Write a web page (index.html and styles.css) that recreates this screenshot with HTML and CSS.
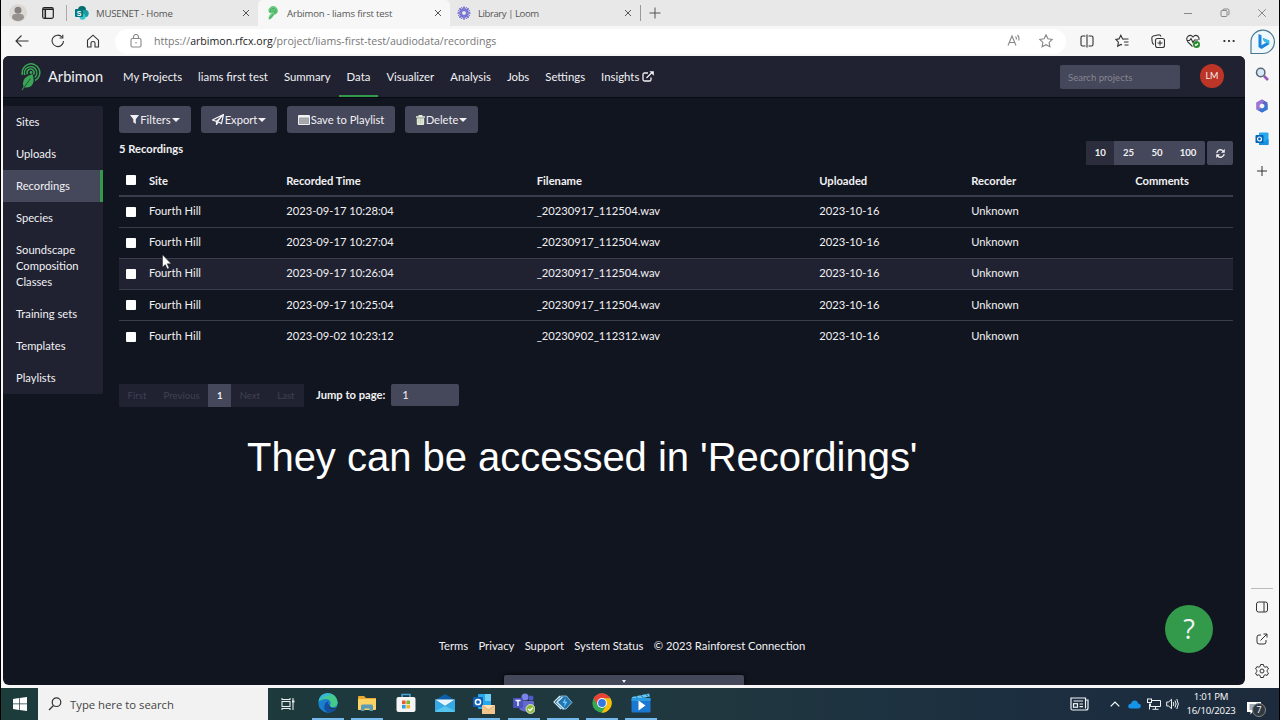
FILE: index.html
```
<!DOCTYPE html>
<html lang="en">
<head>
    <meta charset="UTF-8">
    <meta name="viewport" content="width=device-width, initial-scale=1.0">
    <title>Arbimon - liams first test</title>
    <link rel="stylesheet" href="styles.css">
</head>
<body>
    <div class="tabs">
        <div class="tab-tools">
            <svg class="profile" width="18" height="18" viewBox="0 0 18 18"><circle cx="9" cy="9" r="9" fill="#dcd9d5"/><circle cx="9" cy="6.2" r="3.5" fill="#858281"/><path d="M3 14q0-4 3-4h6q3 0 3 4q-2 3-6 3t-6-3z" fill="#959290"/></svg>
            <svg width="12" height="12" viewBox="0 0 12 12" fill="none" stroke="#222"><rect x=".7" y=".7" width="10.6" height="10.6" rx="1.5" stroke-width="1.2"/><path d="M1 2.2h10M3.300 3v8" stroke-width="1.500"/></svg>
            <span class="divider"></span>
        </div>
        <div class="tab tab-first">
            <svg width="14" height="14" viewBox="0 0 14 14"><circle cx="7" cy="4" r="4" fill="#036c70"/><circle cx="10" cy="7.5" r="3.7" fill="#1a9ba1"/><circle cx="7.5" cy="10.8" r="3" fill="#37c6d0"/><rect y="3" width="8" height="8" rx="1" fill="#03787c"/><text x="1.700" y="9.6" class="icon-letter">S</text></svg>
            <span>MUSENET - Home</span>
            <svg class="close" width="8" height="8" viewBox="0 0 8 8"><path d="M1 1l6 6M7 1l-6 6"/></svg>
        </div>
        <div class="tab tab-active">
            <svg width="14" height="14" viewBox="0 0 20 26"><path d="M3 13A8.5 8.5 0 1 1 16 15Q11 16 10 20Q7 25 2 25Q1 17 8 14z" fill="#6ccb83"/><path d="M5 11a5.5 5.5 0 1 1 9 3M8 11a2.5 2.5 0 1 1 4 2M3 24l8-9" fill="none" stroke="#329a4a" stroke-width="1.3"/></svg>
            <span>Arbimon - liams first test</span>
            <svg class="close" width="8" height="8" viewBox="0 0 8 8"><path d="M1 1l6 6M7 1l-6 6"/></svg>
        </div>
        <div class="tab tab-loom">
            <svg width="14" height="14" viewBox="0 0 14 14"><g stroke="#6a66cf" stroke-width="1.600"><path d="M7 .5v13M.5 7h13M2.4 2.4l9.2 9.2M11.6 2.4l-9.2 9.2"/><path d="M4.5 1l5 12M9.5 1l-5 12M1 4.5l12 5M1 9.5l12-5" stroke-width="1"/></g><circle cx="7" cy="7" r="2" fill="#e8e8e8"/></svg>
            <span>Library | Loom</span>
            <svg class="close" width="8" height="8" viewBox="0 0 8 8"><path d="M1 1l6 6M7 1l-6 6"/></svg>
        </div>
        <svg class="new-tab" width="12" height="12" viewBox="0 0 12 12"><path d="M6 .5v11M.5 6h11"/></svg>
        <div class="window-controls">
            <svg width="10" height="10" viewBox="0 0 10 10"><path d="M1 5.5h8"/></svg>
            <svg width="10" height="10" viewBox="0 0 10 10"><rect x="1" y="2.5" width="6" height="6" rx="1"/><path d="M3 2.5V2q0-1 1-1h3.500q1.500 0 1.500 1.500V6q0 1-1 1"/></svg>
            <svg width="10" height="10" viewBox="0 0 10 10"><path d="M1.200 1.200l7.600 7.600M8.800 1.200l-7.600 7.600"/></svg>
        </div>
    </div>

    <div class="browser">
        <div class="browser-main">
            <div class="toolbar">
                <div class="nav-icons">
                    <svg width="14" height="14" viewBox="0 0 14 14"><path d="M13.500 7H1M6.500 1.500L1 7l5.500 5.500"/></svg>
                    <svg width="14" height="14" viewBox="0 0 14 14"><path d="M12.500 7a5.700 5.700 0 1 1-1.500-4M11.800.8v3.200H8.600"/></svg>
                    <svg width="14" height="14" viewBox="0 0 14 14"><path d="M1.500 6.200L7 1.200l5.500 5V13H9V9q0-1.500-2-1.500T5 9v4H1.500z"/></svg>
                </div>
                <div class="address">
                    <svg width="12" height="14" viewBox="0 0 12 14"><rect x="1" y="4.500" width="10" height="8.500" rx="1.500"/><path d="M3.500 4.500V3a2.500 2.500 0 0 1 5 0v1.500M6 8v1.500"/></svg>
                    <span class="url">https://<b>arbimon.rfcx.org</b>/project/liams-first-test/audiodata/recordings</span>
                    <svg class="read" width="14" height="14" viewBox="0 0 14 14"><path d="M1 11.500L5 2l4 9.500M2.400 8.500h5.200M8.500 2.500q1.200 1.200.8 3M10.500 1q2.200 2.200 1.200 5.500"/></svg>
                    <svg width="14" height="14" viewBox="0 0 14 14"><path d="M7 .8l1.900 4 4.400.6-3.200 3 .8 4.400L7 10.700l-3.900 2.100.8-4.400-3.200-3 4.400-.6z"/></svg>
                </div>
                <div class="browser-icons">
                    <svg width="14" height="14" viewBox="0 0 14 14"><path d="M5.500 2H2.500Q1 2 1 3.500v7Q1 12 2.500 12h3M8.500 2h3Q13 2 13 3.500v7q0 1.500-1.500 1.500h-3M7 .5v13"/></svg>
                    <svg width="14" height="14" viewBox="0 0 14 14"><path d="M9.500 5.200L7.600 4.900 5.800 1.300 4 4.900 .8 5.400l2.600 2.700-.7 4 3.100-1.700 1.200.7M8.500 5h5M9 8h4.500M9.500 11h4"/></svg>
                    <svg width="14" height="14" viewBox="0 0 14 14"><rect x="4.500" y="4.500" width="9" height="9" rx="2"/><path d="M9 6.500v5M6.500 9h5M3 10.500Q1.500 10 1.200 8L.8 4q0-1.500 1.500-2L8 .8q1.500 0 2 1.700"/></svg>
                    <svg width="14" height="14" viewBox="0 0 14 14"><path d="M6.500 12.500L1.800 7.800Q-.5 4.500 2 2.300 4.800.2 7 3q2.200-2.800 5-.7 1.500 1.700.8 3.700M1 6.500h2.500L5 4.500l2 4L8.500 6H12"/><circle cx="10.500" cy="10.500" r="3.500" fill="#2a8a2e" stroke="none"/><path d="M9 10.500l1 1 2-2" stroke="#fff"/></svg>
                    <svg width="14" height="14" viewBox="0 0 14 14"><path d="M1.500 7h1.800M6.100 7h1.800M10.700 7h1.800" stroke-width="1.800"/></svg>
                </div>
            </div>

            <div class="app">
                <header class="header">
                    <svg class="logo" width="20" height="28" viewBox="0 0 20 28"><g fill="none" stroke="#3aa655" stroke-width="1.500"><path d="M1.500 12A8.800 8.800 0 1 1 14 17.500"/><path d="M3.800 12A6.200 6.200 0 1 1 13.700 14.500"/><path d="M6.500 11.300A3.500 3.500 0 1 1 12.500 11.500"/></g><circle cx="10" cy="9.500" r="1.400" fill="#3aa655"/><path d="M11.500 11q3 9-2 12.500-3 1.700-6.700.8Q-1 15 11.500 11z" fill="#3aa655"/><path d="M3 24.500q3-4 6.500-9" stroke="#202232" stroke-width=".7" fill="none"/><path d="M1 27l2-3" stroke="#3aa655"/></svg>
                    <span class="brand">Arbimon</span>
                    <nav class="nav">
                        <a>My Projects</a>
                        <a>liams first test</a>
                        <a>Summary</a>
                        <a class="active">Data</a>
                        <a>Visualizer</a>
                        <a>Analysis</a>
                        <a>Jobs</a>
                        <a>Settings</a>
                        <a>Insights <svg width="12" height="11" viewBox="0 0 12 11" fill="none" stroke="#f1f1f3" stroke-width="1.300"><path d="M6 2H2.500Q1 2 1 3.500v5Q1 10 2.500 10h5.500Q9 10 9 8.500V6.500M4.500 7l6-6"/><path d="M7.300.2H11.800V4.700z" fill="#f1f1f3" stroke="none"/></svg></a>
                    </nav>
                    <div class="search-projects">Search projects</div>
                    <div class="avatar">LM</div>
                </header>

                <div class="content">
                    <aside class="sidebar">
                        <a>Sites</a>
                        <a>Uploads</a>
                        <a class="active">Recordings</a>
                        <a>Species</a>
                        <a>Soundscape Composition Classes</a>
                        <a>Training sets</a>
                        <a>Templates</a>
                        <a>Playlists</a>
                    </aside>

                    <main class="main">
                        <div class="actions">
                            <button class="btn-filters"><svg width="9" height="9" viewBox="0 0 9 9"><path d="M0 0h9L5.800 4.200V9L3.300 7.200v-3z"/></svg>Filters<i class="caret"></i></button>
                            <button class="btn-export"><svg width="12" height="11" viewBox="0 0 12 11"><path d="M11.500.5L9.500 9.500 6.500 8 4.500 10.500V7.500L.5 6z M4.500 7.500L11.500.5" fill="none" stroke="#f1f1f3" stroke-width="1.200"/><path d="M4.500 7.500L11 1 6 8l-1.500 2z"/></svg>Export<i class="caret"></i></button>
                            <button class="btn-save"><svg width="12" height="10" viewBox="0 0 12 10"><rect width="12" height="10" rx="1"/><path d="M1 2.500h10V9H1z" fill="#9c9fa3"/><path d="M1.500 4.200h9M1.500 6h9M1.500 7.700h9" stroke="#b9bcbe" stroke-width=".6"/></svg>Save to Playlist</button>
                            <button class="btn-delete"><svg width="9" height="10" viewBox="0 0 9 10"><path d="M0 1.300h2.500V0h4v1.300H9v1.500H0zM.8 3.200h7.400V9q0 1-1 1H1.800q-1 0-1-1z" fill="#e3ead8"/><path d="M2.900 4.200v4.500M4.500 4.200v4.500M6.100 4.200v4.500" stroke="#b6bea9" stroke-width=".6"/></svg>Delete<i class="caret"></i></button>
                        </div>

                        <div class="summary">
                            <strong>5 Recordings</strong>
                            <div class="page-sizes">
                                <span class="selected">10</span><span>25</span><span>50</span><span>100</span>
                            </div>
                            <div class="refresh"><svg width="9" height="9" viewBox="0 0 9 9"><path d="M.8 3.800A3.700 3.700 0 0 1 7.200 2M8.200 5.200A3.700 3.700 0 0 1 1.800 7" fill="none" stroke="#f1f1f3" stroke-width="1.400"/><path d="M8.800 0v3.800H5zM.2 9V5.200H4z"/></svg></div>
                        </div>

                        <table>
                            <colgroup><col class="c-check"><col class="c-site"><col class="c-time"><col class="c-file"><col class="c-upload"><col class="c-recorder"><col></colgroup>
                            <thead>
                                <tr><th><i class="check"></i></th><th>Site</th><th>Recorded Time</th><th>Filename</th><th>Uploaded</th><th>Recorder</th><th>Comments</th></tr>
                            </thead>
                            <tbody>
                                <tr><td><i class="check"></i></td><td>Fourth Hill</td><td>2023-09-17 10:28:04</td><td>_20230917_112504.wav</td><td>2023-10-16</td><td>Unknown</td><td></td></tr>
                                <tr><td><i class="check"></i></td><td>Fourth Hill</td><td>2023-09-17 10:27:04</td><td>_20230917_112504.wav</td><td>2023-10-16</td><td>Unknown</td><td></td></tr>
                                <tr class="hover"><td><i class="check"></i></td><td>Fourth Hill</td><td>2023-09-17 10:26:04</td><td>_20230917_112504.wav</td><td>2023-10-16</td><td>Unknown</td><td></td></tr>
                                <tr><td><i class="check"></i></td><td>Fourth Hill</td><td>2023-09-17 10:25:04</td><td>_20230917_112504.wav</td><td>2023-10-16</td><td>Unknown</td><td></td></tr>
                                <tr><td><i class="check"></i></td><td>Fourth Hill</td><td>2023-09-02 10:23:12</td><td>_20230902_112312.wav</td><td>2023-10-16</td><td>Unknown</td><td></td></tr>
                            </tbody>
                        </table>

                        <div class="paging">
                            <div class="pages"><span>First</span><span>Previous</span><span class="current">1</span><span>Next</span><span>Last</span></div>
                            <strong>Jump to page:</strong>
                            <div class="page-input">1</div>
                        </div>
                    </main>
                </div>

                <footer class="footer">
                    <a>Terms</a><a>Privacy</a><a>Support</a><a>System Status</a><span>© 2023 Rainforest Connection</span>
                </footer>
                <div class="drawer"><i class="caret"></i></div>
                <div class="help">?</div>
            </div>
        </div>

        <aside class="edge-bar">
            <svg class="bing" width="25" height="26" viewBox="0 0 25 26"><path d="M1 24.500V12.500A11.700 11.700 0 1 1 12.700 24.500z" fill="#eef8fd" stroke="#49798e" stroke-width="1.200"/><path d="M8.500 5l3 1.200v10l5-2.700-2.500-1.200-1.300-3.300 6.500 2.400v3.800L11.500 20l-3-2z" fill="#1b86dc"/><path d="M14 12.300l-1.300-3.300 6.500 2.400v3.800z" fill="#35bce8"/></svg>
            <svg width="14" height="14" viewBox="0 0 14 14"><path d="M9 9l4 4" stroke="#9a55b8" stroke-width="2.500"/><circle cx="5.700" cy="5.500" r="4.200" fill="#d4ebf7" stroke="#5b6477" stroke-width="1.500"/></svg>
            <svg width="14" height="14" viewBox="0 0 14 14"><path d="M7 .5l5.500 3v7L7 13.500l-5.500-3v-7z" fill="#5866c5"/><path d="M7 .5L1.500 3.500v7L5 12V6l4-3.500z" fill="#a273d6"/><path d="M12.500 5v5.500L7 13.500 3 11l5-1.500z" fill="#3478d5"/><path d="M7 4.500L9.300 5.800v2.500L7 9.600 4.700 8.300V5.800z" fill="#f7f7f7"/></svg>
            <svg width="14" height="14" viewBox="0 0 14 14"><rect x="4" y=".5" width="9.500" height="12" rx="1" fill="#28a8ea"/><path d="M4 7l5 3 4.500-3v6H4z" fill="#1490df"/><rect x=".5" y="3" width="8" height="8" rx="1" fill="#0364b8"/><circle cx="4.500" cy="7" r="2" fill="none" stroke="#fff" stroke-width="1.200"/></svg>
            <svg width="14" height="14" viewBox="0 0 14 14" class="line"><path d="M7 2v10M2 7h10"/></svg>
            <div class="edge-bottom">
                <svg width="14" height="14" viewBox="0 0 14 14" class="line"><rect x="1.500" y="2" width="11" height="10" rx="2"/><path d="M9 2v10"/></svg>
                <svg width="14" height="14" viewBox="0 0 14 14" class="line"><path d="M6 3H4Q2 3 2 5v5q0 2 2 2h5q2 0 2-2V8M5.500 8.500L12 2M8.500 2H12v3.500"/></svg>
                <svg width="16" height="16" viewBox="0 0 16 16" class="line"><circle cx="8" cy="8" r="2"/><path d="M6.600 1.500h2.800l.5 2 1.200.7 2-.6 1.400 2.400L13 7.400v1.200l1.500 1.400-1.400 2.400-2-.6-1.200.7-.5 2H6.600l-.5-2-1.200-.7-2 .6L1.500 10 3 8.600V7.400L1.500 6l1.400-2.400 2 .6 1.200-.7z"/></svg>
            </div>
        </aside>
    </div>

    <div class="taskbar">
        <div class="start"><svg width="14" height="14" viewBox="0 0 14 14" fill="#fff"><path d="M0 2l6-.9v5.500H0zM6.700 1L14 0v6.600H6.700zM0 7.300h6v5.600L0 12zM6.700 7.300H14V14l-7.300-1z"/></svg></div>
        <div class="task-search"><svg width="14" height="14" viewBox="0 0 14 14" fill="none" stroke="#333" stroke-width="1.200"><circle cx="8.500" cy="5.200" r="4.300"/><path d="M5.500 8.500L1 13"/></svg>Type here to search</div>
        <div class="task-view"><svg width="14" height="14" viewBox="0 0 14 14" fill="none" stroke="#e6ecec" stroke-width="1.100"><path d="M1 1v1.500h8V1M1 13v-1.500h8V13M12 1v12"/><rect x="1" y="4.500" width="8" height="5"/><path d="M11 4.500h2.500" stroke-width="2"/></svg></div>
        <div class="task-app open"><svg width="20" height="20" viewBox="0 0 20 20"><circle cx="10" cy="10" r="9.700" fill="#1b7fd0"/><path d="M.5 8.500Q2 .3 10 .3T19.700 9q0 5-5 5-3 0-3-1.500Q13.500 11 12 8 9 4 .5 8.500z" fill="#45c98a"/><path d="M.5 8.500Q2 .3 10 .3q3 0 5 1.500Q7 2 .5 8.500z" fill="#35b7dd"/><path d="M11.700 12.500q.7 4.500 7 2.500-2.500 4.600-8 4.700-6-2-4-8Q7.500 8.500 11 8.200 9 10 11.700 12.500z" fill="#1450a0"/><path d="M12 12q-.7 3 3.500 3.200 3 0 4-2l-1 2q-3 2-6 .5-2-1.200-.5-3.700z" fill="#223a45"/></svg></div>
        <div class="task-app open"><svg width="18" height="15" viewBox="0 0 18 15"><path d="M0 1Q0 0 1 0h5l2 2h10v4H0z" fill="#e8a92e"/><rect y="3" width="18" height="11" rx=".7" fill="#fbd465"/><path d="M3 15V10q0-1.500 1.500-1.500h9Q15 8.500 15 10v5h-3.500v-2.500h-5V15z" fill="#5a9bb5"/></svg></div>
        <div class="task-app"><svg width="20" height="20" viewBox="0 0 20 20"><path d="M6 5V1.500h8V5" fill="none" stroke="#43a7dd" stroke-width="1.500"/><rect x=".5" y="4" width="19" height="15" rx="2" fill="#f5f5f5"/><path d="M6 7.500h3.600v3.600H6z" fill="#e65c38"/><path d="M10.400 7.500H14v3.600h-3.600z" fill="#7fb42b"/><path d="M6 11.900h3.600v3.600H6z" fill="#2ca1de"/><path d="M10.400 11.900H14v3.600h-3.600z" fill="#f4b62b"/></svg></div>
        <div class="task-app"><svg width="20" height="18" viewBox="0 0 20 18"><path d="M0 6l10-6 10 6v6H0z" fill="#0d5da8"/><path d="M2 5h16v6H2z" fill="#1769ac"/><path d="M0 5.500h20L10 12z" fill="#e8f4fb"/><path d="M0 5.500l10 6.500 10-6.500V17q0 1-1 1H1q-1 0-1-1z" fill="#34a9e4"/><path d="M0 17l10-5 10 5-1 1H1z" fill="#55c5ef"/></svg></div>
        <div class="task-app open"><svg width="22" height="21" viewBox="0 0 22 21"><rect x="5" y="1" width="13" height="15" rx="1" fill="#28a8ea"/><path d="M12 1h6v7h-6z" fill="#6fd0f7"/><rect y="4" width="10" height="10" rx="1" fill="#0f60b6"/><circle cx="5" cy="9" r="2.600" fill="none" stroke="#fff" stroke-width="1.500"/><path d="M9 12h13v9H9z" fill="#f3c58b"/><path d="M9 12l6.500 5 6.500-5" fill="#fbe0b8" stroke="#c8965a" stroke-width=".6"/></svg></div>
        <div class="task-app open"><svg width="22" height="21" viewBox="0 0 22 21"><circle cx="12" cy="4" r="3.500" fill="#7b83eb"/><circle cx="18" cy="5" r="2.500" fill="#5059c9"/><path d="M6 8h14q1 0 1 1v5q-1 4-4 3-2 2-5 1.500-6-.5-6-5z" fill="#6469ce"/><rect y="5" width="10" height="10" rx="1" fill="#4b53bc"/><path d="M2.500 7.500h5M5 7.500V13" stroke="#fff" stroke-width="1.400"/><circle cx="17.500" cy="16" r="4.500" fill="#8cbd3b" stroke="#edf3df" stroke-width=".8"/><path d="M15.300 16l1.700 1.700 2.800-3" fill="none" stroke="#fff" stroke-width="1.300"/></svg></div>
        <div class="task-app open"><svg width="20" height="16" viewBox="0 0 20 16"><path d="M7.500 1h6L19 7.500 13 14H9L3.500 7.500z" fill="#2674ad" stroke="#9dd6f3" stroke-width=".8"/><path d="M7 1L1 7l7 7M9.500 2L4 7.300l7 6.700" fill="none" stroke="#c9e8f6" stroke-width="1.200"/><path d="M12.500 3L9.500 8h2.200l-.7 4 3.500-5.300h-2.300z" fill="#63caff"/></svg></div>
        <div class="task-app open"><svg width="20" height="20" viewBox="0 0 20 20"><circle cx="10" cy="10" r="9.700" fill="#34a853"/><path d="M1.600 5.200A9.700 9.700 0 0 1 18.400 5.200H10L5.800 12.400z" fill="#ea4335"/><path d="M18.400 5.200A9.700 9.700 0 0 1 9.600 19.700L14.200 12.400 10 5.200z" fill="#fbbc05"/><circle cx="10" cy="10" r="4.900" fill="#fff"/><circle cx="10" cy="10" r="3.900" fill="#3578e5"/></svg></div>
        <div class="task-app open"><svg width="20" height="20" viewBox="0 0 20 20"><path d="M1 4l17-3.500 1 3L2 7z" fill="#63c7f1"/><path d="M5 3.200l2 2.500M10 2.200l2 2.500M15 1.100l2 2.500" stroke="#1b5b99"/><rect x=".5" y="5" width="19" height="14.500" rx="1.500" fill="#1b78d0"/><path d="M.5 5h19v3H.5z" fill="#2a9be0"/><path d="M7.500 7.500l7 5-7 5z" fill="#fff"/></svg></div>
        <div class="tray">
            <svg width="19" height="14" viewBox="0 0 19 14" fill="none" stroke="#f0f3f5" stroke-width="1.200"><path d="M15.500 3H18v8q0 2-2 2H2.500Q1 13 1 11.500V1h14.500v10.500"/><path d="M3.500 4h9.500M9.500 7H13M9.500 9.700H13"/><rect x="3.500" y="6.700" width="4" height="3.500"/></svg>
            <svg class="chevron" width="10" height="6" viewBox="0 0 10 6" fill="none" stroke="#fff" stroke-width="1.200"><path d="M.7 5.300L5 1l4.300 4.300"/></svg>
            <svg class="cloud" width="13" height="9" viewBox="0 0 13 9"><path d="M3 8.500Q0 8.500.2 6 .5 3.700 3 3.800 4 .5 7 .6q2.500.2 3.200 3 2.700.2 2.700 2.500 0 2.400-2.500 2.400z" fill="#1793e6"/></svg>
            <svg class="network" width="14" height="12" viewBox="0 0 14 12" fill="none" stroke="#f0f3f5"><path d="M5 2.500h8.500v6H3.500v-3M8.500 8.500V11M5.500 11.300h6M2.500 5.500v6"/><rect x=".5" y="1" width="4" height="3.500"/></svg>
            <svg class="sound" width="13" height="12" viewBox="0 0 13 12" fill="none" stroke="#f0f3f5"><path d="M.7 4h2l2.800-2.700v9.400L2.700 8h-2zM7.200 4q1.200 2 0 4M9 2.500q2.200 3.500 0 7M10.800 1q3 5 0 10"/></svg>
            <div class="clock">1:01 PM<br>16/10/2023</div>
            <div class="notifications"><svg width="14" height="13" viewBox="0 0 14 13"><path d="M0 0h14v10H5.500L3.500 12.500V10H0z" fill="#fff"/><path d="M2.500 3h9M2.500 5h9M2.500 7h6" stroke="#1d2b3c" stroke-width=".8"/></svg><span class="badge">7</span></div>
        </div>
    </div>

    <div class="caption">They can be accessed in 'Recordings'</div>
    <svg class="cursor" width="10" height="16" viewBox="0 0 10 16"><path d="M.5.8v12.400l2.800-2.600 2 4.300 1.900-.9-2-4.200h4z" fill="#fff" stroke="#222" stroke-width=".5"/></svg>
</body>
</html>
```
FILE: styles.css
```
:root {
    --page: #11151f;
    --panel: #202232;
    --control: #45475b;
    --text: #f1f1f3;
    --green: #329a4a;
    --ui-font: 'Open Sans', 'Noto Sans', sans-serif;
}

* {
    box-sizing: border-box;
}

body {
    margin: 0;
    width: 1280px;
    height: 720px;
    overflow: hidden;
    position: relative;
    display: flex;
    flex-direction: column;
    background: #f7f7f8;
    border: solid #000;
    border-width: 0 1px;
    font-family: var(--ui-font);
}

svg {
    flex: none;
}

/* Browser tabs */
.tabs {
    height: 26px;
    display: flex;
    align-items: center;
    background: #e8e8e8;
    color: #555;
    font-size: 9.6px;
    letter-spacing: -0.18px;
}

.tab-tools {
    width: 67px;
    padding-left: 8px;
    display: flex;
    align-items: center;
    gap: 15px;
}

.divider {
    width: 1px;
    height: 16px;
    background: #aaa;
    margin-left: -3px;
}

.tab {
    height: 26px;
    display: flex;
    align-items: center;
    padding: 0 8px 0 7px;
    gap: 7px;
    white-space: nowrap;
}

.tab-first {
    width: 190px;
}

.tab-active {
    width: 192px;
    padding-left: 8px;
    background: #f7f7f8;
    border-radius: 5px 5px 0 0;
}

.tab-loom {
    width: 191px;
    border-right: 1px solid #999;
    height: 16px;
    padding-right: 8px;
    margin-right: 8px;
    letter-spacing: -0.45px;
}

.icon-letter {
    font: bold 7px 'Liberation Sans', sans-serif;
    fill: #fff;
}

.close {
    margin-left: auto;
}

.close, .new-tab, .window-controls svg {
    fill: none;
    stroke: #555;
}

.window-controls {
    margin-left: auto;
    padding-right: 12px;
    display: flex;
    gap: 27px;
}

.window-controls svg {
    stroke: #888;
}

/* Toolbar */
.browser {
    height: 662px;
    display: flex;
}

.browser-main {
    width: 1244px;
    padding-left: 2px;
}

.toolbar {
    height: 30px;
    display: flex;
    align-items: center;
}

.toolbar svg {
    fill: none;
    stroke: #333;
    stroke-width: 1.1;
}

.nav-icons {
    width: 112px;
    padding-left: 12px;
    display: flex;
    gap: 21.5px;
}

.address {
    width: 951px;
    height: 25px;
    padding: 0 13px 0 15px;
    display: flex;
    align-items: center;
    background: #fff;
    border-radius: 13px;
}

.toolbar .address svg {
    stroke: #888;
}

.url {
    margin-left: 12px;
    color: #777;
    font-size: 10.6px;
}

.url b {
    color: #222;
    font-weight: normal;
}

.read {
    margin-left: auto;
    margin-right: 18px;
}

.browser-icons {
    display: flex;
    gap: 21.4px;
    padding-left: 14px;
}

/* Arbimon */
.app {
    position: relative;
    width: 1242px;
    height: 629px;
    display: flex;
    flex-direction: column;
    overflow: hidden;
    background: var(--page);
    border-radius: 6px;
    color: var(--text);
    font-family: Lato, sans-serif;
    font-size: 11.2px;
    line-height: 16px;
}

.header {
    height: 42px;
    display: flex;
    align-items: center;
    background: var(--panel);
    border-bottom: 1px solid #080a11;
}

.logo {
    margin-left: 18px;
}

.brand {
    width: 67px;
    margin-left: 7px;
    font-size: 14.6px;
}

.nav {
    height: 42px;
    display: flex;
}

.nav a {
    padding: 13px 8px 0;
    height: 41px;
    font-size: 11.36px;
    white-space: nowrap;
}

.nav .active {
    border-bottom: 2px solid var(--green);
}

.nav svg {
    vertical-align: -1px;
}

.search-projects {
    width: 120px;
    height: 24px;
    margin-left: auto;
    padding: 5px 8px;
    background: var(--control);
    border-radius: 2px;
    color: #85868f;
    font-size: 9.6px;
}

.avatar {
    width: 24px;
    height: 24px;
    margin: -2px 21px 0 20px;
    border-radius: 50%;
    background: #bd3527;
    font-size: 9px;
    line-height: 24px;
    text-align: center;
}

.content {
    display: flex;
    height: 530px;
    padding-top: 8px;
}

.sidebar {
    width: 100px;
    height: 288px;
    background: var(--panel);
    border-radius: 2px;
}

.sidebar a {
    display: block;
    padding: 8px 16px 8px 13px;
}

.sidebar .active {
    background: var(--control);
    border-right: 3px solid var(--green);
}

.main {
    width: 1114px;
    margin-left: 16px;
}

.actions {
    display: flex;
    gap: 10px;
}

.actions button {
    height: 27px;
    padding: 0;
    display: flex;
    align-items: center;
    justify-content: center;
    gap: 1px;
    border: 0;
    border-radius: 3px;
    background: var(--control);
    color: var(--text);
    font-family: Lato, sans-serif;
    font-size: 11.2px;
}

.actions svg, .refresh svg {
    fill: var(--text);
}

.btn-filters {
    width: 72px;
}

.btn-export {
    width: 76px;
}

.btn-save {
    width: 108px;
}

.btn-delete {
    width: 73px;
}

.caret {
    flex: none;
    width: 0;
    height: 0;
    border: 3.5px solid transparent;
    border-top: 4px solid var(--text);
    border-bottom: 0;
}

.actions .caret {
    border-left-width: 4px;
    border-right-width: 4px;
}

.summary {
    height: 32px;
    display: flex;
    padding-top: 8px;
}

.page-sizes {
    height: 24px;
    margin-left: auto;
    display: flex;
    overflow: hidden;
    border-radius: 2px;
    background: var(--control);
    font-size: 9.6px;
    font-weight: bold;
    line-height: 24px;
}

.page-sizes span {
    padding: 0 8.6px;
}

.page-sizes .selected {
    background: #2b2d3d;
}

.refresh {
    width: 26px;
    height: 24px;
    margin-left: 2px;
    display: flex;
    align-items: center;
    justify-content: center;
    background: var(--control);
    border-radius: 2px;
}

table {
    width: 100%;
    border-collapse: collapse;
    table-layout: fixed;
}

.c-check { width: 23.5px; }
.c-site { width: 137.3px; }
.c-time { width: 250.5px; }
.c-file { width: 282.5px; }
.c-upload { width: 152px; }
.c-recorder { width: 164px; }

th, td {
    height: 31.2px;
    padding: 0 6.4px 1px;
    text-align: left;
    border-top: 1px solid #3b3d4c;
}

th {
    height: 31px;
    padding-top: 2px;
    padding-bottom: 0;
    border: 0;
    border-bottom: 2px solid #3b3d4c;
}

.hover {
    background: var(--panel);
}

.check {
    display: block;
    width: 10px;
    height: 10px;
    margin-left: 1px;
    background: #fff;
    border-radius: 1px;
}

td .check {
    margin-top: 1px;
}

th .check {
    margin-top: -2px;
}

.paging {
    display: flex;
    align-items: center;
    height: 23px;
    margin-top: 32px;
}

.pages {
    display: flex;
    width: 185px;
    margin-right: 12px;
    background: var(--panel);
    color: #3f4153;
    font-size: 9.6px;
    line-height: 23px;
}

.pages span {
    padding: 0 8.6px;
}

.pages .current {
    background: var(--control);
    color: var(--text);
    font-weight: bold;
}

.page-input {
    width: 68px;
    height: 22px;
    margin-left: 6px;
    padding: 3px 11px;
    background: var(--control);
    border-radius: 2px;
}

.footer {
    display: flex;
    justify-content: center;
    gap: 10.3px;
    padding: 10px 4px 0 0;
    font-size: 11.25px;
}

.drawer {
    position: absolute;
    left: 501px;
    bottom: 0;
    width: 240px;
    height: 10px;
    display: flex;
    justify-content: center;
    padding-top: 5px;
    background: var(--control);
    border-radius: 2px 2px 0 0;
    box-shadow: 0 0 5px #000;
}

.drawer .caret {
    border-width: 3px 2.5px 0;
}

.help {
    position: absolute;
    right: 32px;
    bottom: 32px;
    width: 48px;
    height: 48px;
    border-radius: 50%;
    background: var(--green);
    font: 27px/48px var(--ui-font);
    text-align: center;
}

/* Edge sidebar */
.edge-bar {
    width: 34px;
    display: flex;
    flex-direction: column;
    align-items: center;
    gap: 18.5px;
}

.bing {
    margin: 3px 0 -7px;
}

.line {
    fill: none;
    stroke: #333;
}

.edge-bottom {
    margin-top: auto;
    width: 22px;
    padding: 11px 0 9px;
    display: flex;
    flex-direction: column;
    align-items: center;
    gap: 17.5px;
    border-top: 1px solid #bbb;
}

/* Windows taskbar */
.taskbar {
    height: 32px;
    display: flex;
    background: linear-gradient(90deg, #1c3b3b, #20373f 55%, #1b2e40 80%, #1d2b3c);
}

.taskbar > div {
    display: flex;
    align-items: center;
    justify-content: center;
}

.taskbar .start {
    width: 37px;
}

.taskbar .task-search {
    width: 230px;
    padding-left: 10px;
    justify-content: flex-start;
    gap: 8px;
    background: #f2f2f2;
    color: #444;
    font-size: 11.3px;
}

.task-view {
    width: 40px;
}

.task-app {
    width: 39.2px;
    border-bottom: 2px solid transparent;
}

.task-app.open {
    background: linear-gradient(#76b9ed, #76b9ed) center bottom / 32px 2px no-repeat border-box;
}

.taskbar .tray {
    margin-left: auto;
    justify-content: flex-start;
    width: 209px;
    color: #fff;
}

.chevron {
    margin-left: 21px;
}

.cloud {
    margin-left: 8px;
}

.network {
    margin-left: 6px;
}

.sound {
    margin-left: 5px;
}

.clock {
    width: 64px;
    text-align: center;
    font-size: 9.6px;
    letter-spacing: -0.2px;
    line-height: 14.5px;
}

.notifications {
    position: relative;
    margin-left: 4px;
    height: 13px;
}

.badge {
    position: absolute;
    left: 5px;
    top: 5px;
    width: 14px;
    height: 14px;
    border: 1px solid #888;
    border-radius: 50%;
    background: #303842;
    font-size: 9px;
    line-height: 12px;
    text-align: center;
}

/* Video overlay */
.caption {
    position: absolute;
    left: 246px;
    top: 434px;
    color: #fff;
    font: 40px/46px 'Liberation Sans', sans-serif;
    letter-spacing: -0.02px;
    white-space: nowrap;
}

.cursor {
    position: absolute;
    left: 161px;
    top: 254px;
}
```
